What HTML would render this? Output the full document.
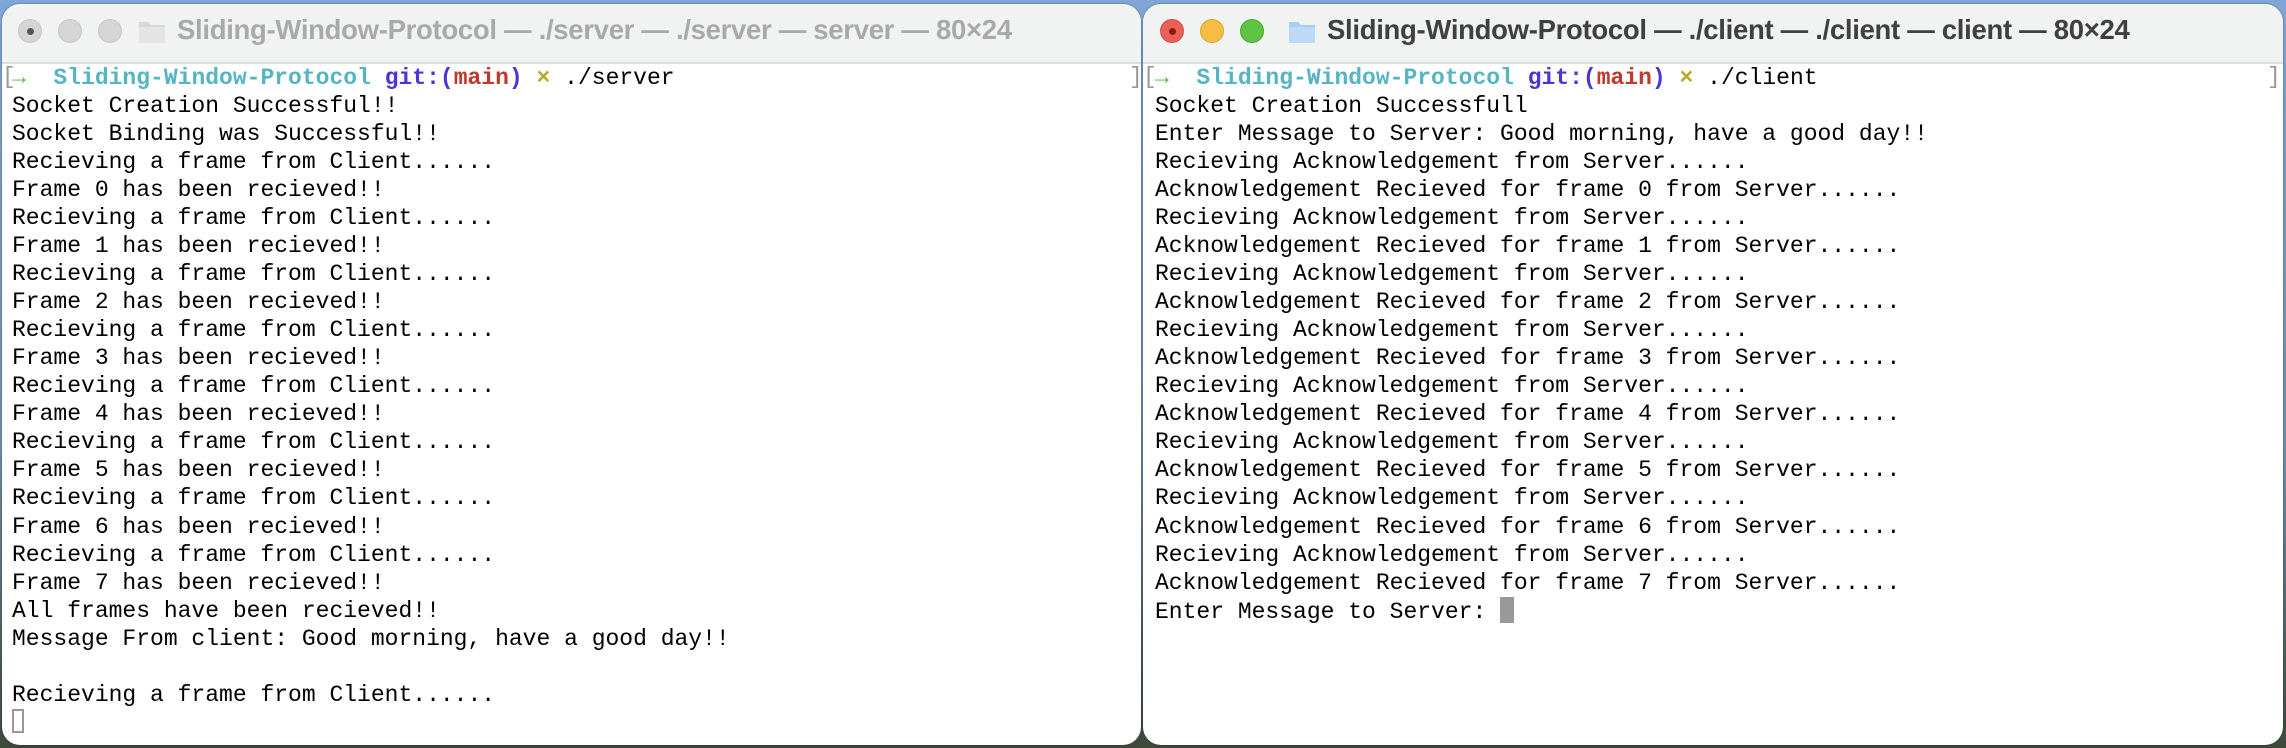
<!DOCTYPE html>
<html><head><meta charset="utf-8"><style>
*{margin:0;padding:0;box-sizing:border-box}
html,body{width:2286px;height:748px;overflow:hidden}
body{background:linear-gradient(180deg,#7fa6d6 0%,#6d8fae 60%,#3d4a3a 100%);position:relative;font-family:"Liberation Mono",monospace}
.win{position:absolute;top:4px;height:741px;background:#fff;border-radius:18px;overflow:hidden;box-shadow:0 0 2px rgba(0,0,0,.4)}
.tb{position:absolute;left:0;top:0;right:0;height:60px;background:#f1f2f2;border-bottom:2px solid #dcdcdc}
.dot{position:absolute;top:15px;width:24px;height:24px;border-radius:50%}
.title{position:absolute;top:10px;font:bold 27.5px "Liberation Sans",sans-serif;white-space:nowrap;letter-spacing:-0.3px}
.fold{position:absolute;top:13px;width:28px;height:28px}
.term{position:absolute;left:0;top:60px;font-size:23px;line-height:28.03px;white-space:pre;color:#000}
.g{color:#52b535;font-weight:bold}.c{color:#55b5c4;font-weight:bold}.p{color:#4a36d8;font-weight:bold}.r{color:#c0392b;font-weight:bold}.y{color:#b7aa2e;font-weight:bold}
.br{position:absolute;color:#999;font-size:23px}
</style></head><body>
<div class="win" style="left:2px;width:1139px">
 <div class="tb">
  <div class="dot" style="left:16px;background:#d5d5d5;border:1px solid #c4c4c4"><div style="position:absolute;left:8px;top:8px;width:7px;height:7px;border-radius:50%;background:#555"></div></div>
  <div class="dot" style="left:56px;background:#d5d5d5;border:1px solid #c4c4c4"></div>
  <div class="dot" style="left:96px;background:#d5d5d5;border:1px solid #c4c4c4"></div>
  <svg class="fold" style="left:136px" viewBox="0 0 28 28"><path d="M1 5h9l3 3h14v18H1z" fill="#d8d8d8"/><path d="M1 10h26v16H1z" fill="#e4e4e4"/></svg>
  <div class="title" style="left:175px;color:#a9a9a9">Sliding-Window-Protocol — ./server — ./server — server — 80×24</div>
 </div>
 <div class="br" style="left:0;top:60px">[</div>
 <div class="br" style="left:1127px;top:60px">]</div>
 <div class="term" style="left:10px"><span class="g">→</span>  <span class="c">Sliding-Window-Protocol</span> <span class="p">git:(</span><span class="r">main</span><span class="p">)</span> <span class="y">×</span> ./server
Socket Creation Successful!!
Socket Binding was Successful!!
Recieving a frame from Client......
Frame 0 has been recieved!!
Recieving a frame from Client......
Frame 1 has been recieved!!
Recieving a frame from Client......
Frame 2 has been recieved!!
Recieving a frame from Client......
Frame 3 has been recieved!!
Recieving a frame from Client......
Frame 4 has been recieved!!
Recieving a frame from Client......
Frame 5 has been recieved!!
Recieving a frame from Client......
Frame 6 has been recieved!!
Recieving a frame from Client......
Frame 7 has been recieved!!
All frames have been recieved!!
Message From client: Good morning, have a good day!!

Recieving a frame from Client......
<span style="display:inline-block;width:12px;height:24px;border:2px solid #999;vertical-align:-4px"></span></div>
</div>
<div class="win" style="left:1143px;width:1140px">
 <div class="tb">
  <div class="dot" style="left:17px;background:#ec5f57;border:1px solid #d24c44"><div style="position:absolute;left:8px;top:8px;width:7px;height:7px;border-radius:50%;background:#8a1a14"></div></div>
  <div class="dot" style="left:57px;background:#f6bd45;border:1px solid #dca235"></div>
  <div class="dot" style="left:97px;background:#5ec443;border:1px solid #4aa935"></div>
  <svg class="fold" style="left:145px" viewBox="0 0 28 28"><path d="M1 5h9l3 3h14v18H1z" fill="#a9cdef"/><path d="M1 10h26v16H1z" fill="#bcdaf5"/></svg>
  <div class="title" style="left:184px;color:#404040">Sliding-Window-Protocol — ./client — ./client — client — 80×24</div>
 </div>
 <div class="br" style="left:0;top:60px">[</div>
 <div class="br" style="left:1124px;top:60px">]</div>
 <div class="term" style="left:12px"><span class="g">→</span>  <span class="c">Sliding-Window-Protocol</span> <span class="p">git:(</span><span class="r">main</span><span class="p">)</span> <span class="y">×</span> ./client
Socket Creation Successfull
Enter Message to Server: Good morning, have a good day!!
Recieving Acknowledgement from Server......
Acknowledgement Recieved for frame 0 from Server......
Recieving Acknowledgement from Server......
Acknowledgement Recieved for frame 1 from Server......
Recieving Acknowledgement from Server......
Acknowledgement Recieved for frame 2 from Server......
Recieving Acknowledgement from Server......
Acknowledgement Recieved for frame 3 from Server......
Recieving Acknowledgement from Server......
Acknowledgement Recieved for frame 4 from Server......
Recieving Acknowledgement from Server......
Acknowledgement Recieved for frame 5 from Server......
Recieving Acknowledgement from Server......
Acknowledgement Recieved for frame 6 from Server......
Recieving Acknowledgement from Server......
Acknowledgement Recieved for frame 7 from Server......
Enter Message to Server: <span style="display:inline-block;width:14px;height:26px;background:#999;vertical-align:-5px"></span></div>
</div>
</body></html>
